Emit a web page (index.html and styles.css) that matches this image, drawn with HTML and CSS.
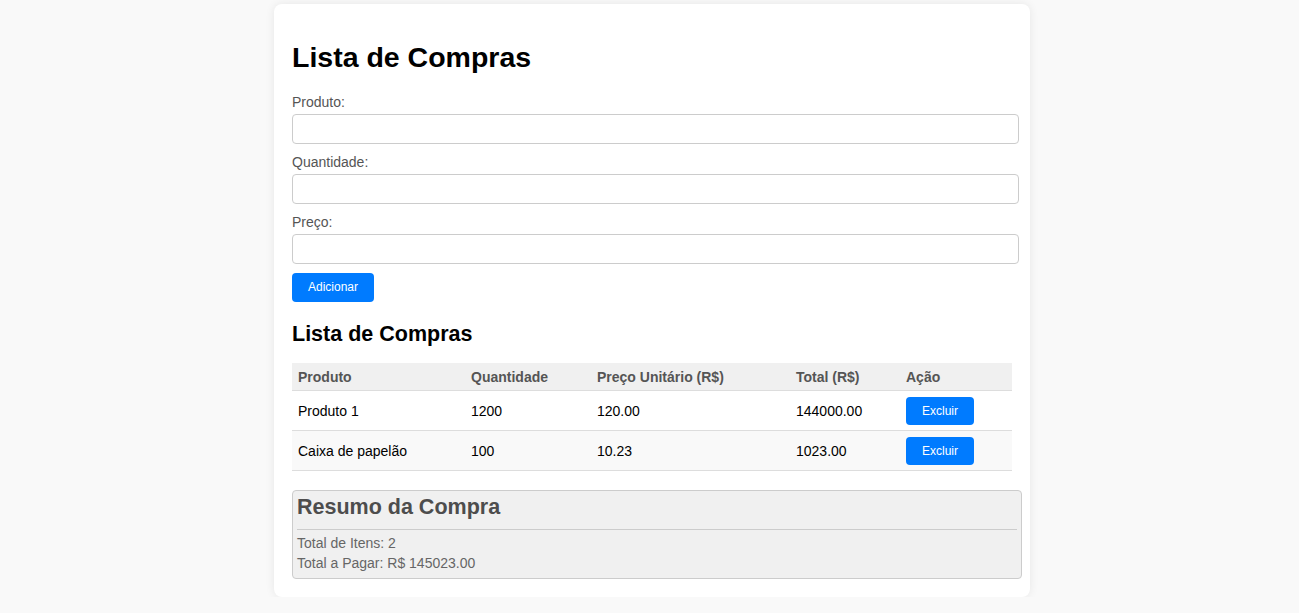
FILE: index.html
```html
<!DOCTYPE html>
<html lang="pt-BR">
<head>
    <meta charset="UTF-8">
    <meta name="viewport" content="width=device-width, initial-scale=1.0">
    <title>Lista de Compras</title>
    <link rel="stylesheet" href="styles.css">
</head>
<body>
    <div class="container">
        <h1>Lista de Compras</h1>

        <form class="form">
            <div class="field">
                <label for="produto">Produto:</label>
                <input type="text" id="produto">
            </div>
            <div class="field">
                <label for="quantidade">Quantidade:</label>
                <input type="number" id="quantidade">
            </div>
            <div class="field">
                <label for="preco">Preço:</label>
                <input type="number" id="preco">
            </div>
            <button type="button" class="btn btn-add">Adicionar</button>
        </form>

        <h2>Lista de Compras</h2>

        <table class="list">
            <colgroup>
                <col style="width: 173px">
                <col style="width: 126px">
                <col style="width: 199px">
                <col style="width: 110px">
                <col style="width: 112px">
            </colgroup>
            <thead>
                <tr>
                    <th>Produto</th>
                    <th>Quantidade</th>
                    <th>Preço Unitário (R$)</th>
                    <th>Total (R$)</th>
                    <th>Ação</th>
                </tr>
            </thead>
            <tbody>
                <tr>
                    <td>Produto 1</td>
                    <td>1200</td>
                    <td>120.00</td>
                    <td>144000.00</td>
                    <td><button class="btn btn-delete">Excluir</button></td>
                </tr>
                <tr>
                    <td>Caixa de papelão</td>
                    <td>100</td>
                    <td>10.23</td>
                    <td>1023.00</td>
                    <td><button class="btn btn-delete">Excluir</button></td>
                </tr>
            </tbody>
        </table>

        <div class="summary">
            <h3>Resumo da Compra</h3>
            <hr>
            <p>Total de Itens: 2</p>
            <p>Total a Pagar: R$ 145023.00</p>
        </div>
    </div>
</body>
</html>
```

FILE: styles.css
```css
body {
    font-family: "Liberation Sans", Arial, sans-serif;
    background: #f9f9f9;
    margin: 0;
    padding: 4px 0 0 5px;
}

.container {
    width: 720px;
    margin: 0 auto;
    padding: 18px;
    background: #fff;
    border-radius: 8px;
    box-shadow: 0 0 10px rgba(0, 0, 0, 0.08);
}

h1 {
    font-size: 28.5px;
    margin: 19px 0 20px;
    color: #000;
}

h2 {
    font-size: 21.5px;
    margin: 20px 0 16px;
    color: #000;
}

.field {
    margin-bottom: 10px;
}

.field label {
    display: block;
    font-size: 14px;
    color: #555;
    margin-bottom: 4px;
}

.field input {
    display: block;
    width: 100%;
    height: 28px;
    padding: 0 2.5px;
    margin: 0;
    border: 1px solid #ccc;
    border-radius: 4px;
    font-family: inherit;
    font-size: 14px;
}

.btn {
    background: #007bff;
    color: #fff;
    border: none;
    border-radius: 4px;
    font-family: inherit;
    font-size: 12px;
    cursor: pointer;
}

.btn-add {
    display: block;
    padding: 7px 16px;
    line-height: 15px;
    margin-top: -1px;
}

.btn-delete {
    padding: 7px 16px;
    line-height: 14px;
}

.list {
    width: 720px;
    border-collapse: collapse;
    table-layout: fixed;
    font-size: 14px;
}

.list th,
.list td {
    padding: 6px;
    text-align: left;
    border-bottom: 1px solid #ddd;
}

.list td {
    padding-bottom: 5px;
    color: #000;
}

.list th {
    padding: 7px 6px 5px;
    background: #f0f0f0;
    color: #555;
    line-height: 15px;
}

.list tbody tr:nth-child(even) {
    background: #f9f9f9;
}

.summary {
    width: 100%;
    margin-top: 19px;
    padding: 4px 4px 5px;
    background: #f0f0f0;
    border: 1px solid #ccc;
    border-radius: 4px;
    color: #666;
    font-size: 14px;
}

.summary h3 {
    font-size: 21.5px;
    line-height: 24px;
    margin: 0;
    color: #4d4d4d;
}

.summary hr {
    border: none;
    border-top: 1px solid #ccc;
    margin: 10px 0 3px;
}

.summary p {
    margin: 0;
    line-height: 20px;
}
```
